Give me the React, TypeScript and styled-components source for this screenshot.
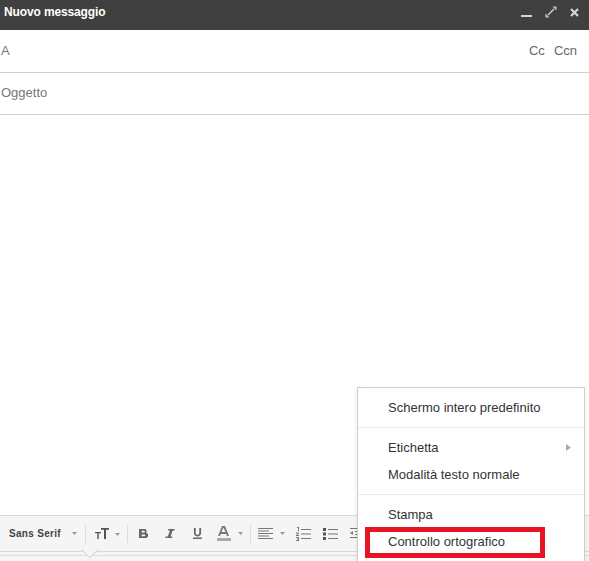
import React from 'react';
import styled, { createGlobalStyle } from 'styled-components';

const Global = createGlobalStyle`
  html, body { margin: 0; padding: 0; background: #fff; }
  body { font-family: "Liberation Sans", Arial, sans-serif; overflow: hidden; }
  * { box-sizing: border-box; }
`;

const Compose = styled.div`
  position: relative;
  width: 589px;
  height: 561px;
  display: flex;
  flex-direction: column;
  overflow: hidden;
  background: #fff;
`;

const Header = styled.header`
  height: 30px;
  flex: none;
  margin-bottom: 1px;
  display: flex;
  align-items: flex-start;
  justify-content: space-between;
  padding: 5px 10px 0 4px;
  background: #404040;
  color: #fff;
  font-size: 12px;
  font-weight: 700;
  line-height: 15px;
  letter-spacing: -0.13px;
`;

const HeaderIcons = styled.div`
  display: flex;
  align-items: center;
  gap: 13px;
  padding-top: 1px;
`;

const Field = styled.div`
  height: 42px;
  flex: none;
  display: flex;
  align-items: center;
  justify-content: space-between;
  padding: 0 12px 2px 1px;
  border-bottom: 1px solid #cfcfcf;
  color: #777;
  font-size: 13px;
`;

const Links = styled.div`
  display: flex;
  gap: 9px;
  font-size: 13px;
  color: #666;
`;

const Body = styled.div`
  flex: 1;
`;

const Toolbar = styled.div`
  height: 37px;
  flex: none;
  display: flex;
  align-items: center;
  padding: 0 0 0 9px;
  background: #f5f5f5;
  border-top: 1px solid #d8d8d8;
  border-bottom: 1px solid #d8d8d8;
`;

const Footer = styled.div`
  position: relative;
  height: 9px;
  flex: none;
  background: #f5f5f5;
  &::after {
    content: '';
    position: absolute;
    left: 0;
    right: 0;
    top: 3px;
    border-top: 1px solid #dcdcdc;
  }
`;

const Notch = styled.span`
  position: absolute;
  left: 84px;
  top: -8px;
  width: 12px;
  height: 12px;
  background: #f5f5f5;
  border-right: 1px solid #d8d8d8;
  border-bottom: 1px solid #d8d8d8;
  transform: rotate(45deg);
  z-index: 1;
`;

const FontName = styled.span`
  font-size: 10px;
  font-weight: 700;
  letter-spacing: 0.3px;
  color: #444;
  width: 60px;
  flex: none;
`;

const Tool = styled.span<{ $w: number }>`
  width: ${p => p.$w}px;
  flex: none;
  display: flex;
  align-items: center;
  justify-content: center;
`;

const Sep = styled.span`
  width: 1px;
  height: 18px;
  flex: none;
  background: #dcdcdc;
`;

const Menu = styled.div`
  position: absolute;
  left: 357px;
  top: 387px;
  width: 228px;
  height: 190px;
  padding: 6px 0;
  background: #fff;
  border: 1px solid #cfcfcf;
  box-shadow: 0 2px 4px rgba(0, 0, 0, 0.1);
  color: #333;
  font-size: 13px;
`;

const MenuItem = styled.div`
  height: 27px;
  display: flex;
  align-items: center;
  justify-content: space-between;
  padding: 0 13px 0 30px;
`;

const MenuRule = styled.div`
  margin: 6px 0;
  border-top: 1px solid #ebebeb;
`;

const Highlight = styled.div`
  position: absolute;
  left: 365px;
  top: 527px;
  width: 180px;
  height: 31px;
  border: 5px solid #e81424;
  pointer-events: none;
`;

const Gly = styled.svg`
  display: block;
  flex: none;
`;

const Caret = () => (
  <Gly width="5" height="3" viewBox="0 0 5 3"><path d="M0 0h5L2.500 3z" fill="#999" /></Gly>
);

export default function App() {
  return (
    <Compose>
      <Global />
      <Header>
        <span>Nuovo messaggio</span>
        <HeaderIcons>
          <Gly width="11" height="12" viewBox="0 0 11 12"><rect y="9" width="11" height="2" fill="#d4d4d4" /></Gly>
          <Gly width="12" height="12" viewBox="0 0 12 12" fill="#c8c8c8">
            <path d="M3 9l6-6" stroke="#c8c8c8" strokeWidth="1.600" />
            <path d="M7.500 0.500H11.500v4zM0.500 7.500V11.500h4z" />
          </Gly>
          <Gly width="9" height="9" viewBox="0 0 9 9" fill="none" stroke="#d4d4d4" strokeWidth="2.200">
            <path d="M1 1l7 7M8 1l-7 7" />
          </Gly>
        </HeaderIcons>
      </Header>
      <Field>
        <span>A</span>
        <Links><span>Cc</span><span>Ccn</span></Links>
      </Field>
      <Field>Oggetto</Field>
      <Body />
      <Toolbar>
        <FontName>Sans Serif</FontName>
        <Tool $w={10}><Caret /></Tool>
        <Tool $w={6} />
        <Sep />
        <Tool $w={41}>
          <Gly width="26" height="11" viewBox="0 0 26 11">
            <path d="M1 4h6v1.300H4.700V11H3.300V5.300H1zM7 0h8v1.800h-3V11h-2V1.800H7z" fill="#555" />
            <path d="M21 5h5l-2.500 3z" fill="#999" />
          </Gly>
        </Tool>
        <Sep />
        <Tool $w={30}>
          <Gly width="9" height="9" viewBox="0 0 10 10">
            <path fillRule="evenodd" d="M0 0h6a2.500 2.500 0 0 1 1.800 4.300A2.800 2.800 0 0 1 6.500 10H0zM3 2v2h2.500a1 1 0 0 0 0-2zM3 6v2h3a1 1 0 0 0 0-2z" fill="#666" />
          </Gly>
        </Tool>
        <Tool $w={24}>
          <Gly width="10" height="9" viewBox="0 0 10 10">
            <path d="M3 0h7v1.800H8L5.500 8.200H7.500V10H0V8.200h2.500L5 1.800H3z" fill="#666" />
          </Gly>
        </Tool>
        <Tool $w={30}>
          <Gly width="9" height="11" viewBox="0 0 10 12">
            <path d="M1 0h2v5.500c0 2.600 4 2.600 4 0V0h2v5.500c0 5-8 5-8 0zM0 10.500h10V12H0z" fill="#666" />
          </Gly>
        </Tool>
        <Tool $w={36}>
          <Gly width="26" height="15" viewBox="0 0 26 15">
            <path d="M5 0h3l4 10H10l-.8-2H3.800L3 10H1zM4.500 6h4L6.500 1.500z" fill="#777" />
            <rect x="0" y="12" width="14" height="3" fill="#aaa" />
            <path d="M21 6h5l-2.500 3z" fill="#999" />
          </Gly>
        </Tool>
        <Tool $w={2} />
        <Sep />
        <Tool $w={41}>
          <Gly width="27" height="11" viewBox="0 0 27 11" fill="#777">
            <path d="M0 0h15v1H0zM0 2.500h11v1H0zM0 5h15v1H0zM0 7.500h11v1H0zM0 10h15v1H0z" />
            <path d="M22 4h5l-2.500 3z" fill="#999" />
          </Gly>
        </Tool>
        <Tool $w={23}>
          <Gly width="15" height="14" viewBox="0 0 15 14" fill="#777">
            <path d="M5 2h10v1H5zM5 6.500h10v1H5zM5 11h10v1H5zM1 0h2v4H2V1H1zM0 5.500h3v1L1 8h2v1H0V8l2-1.500H0zM0 10h3v4H0v-1h2v-.5H1v-1h1V11H0z" />
          </Gly>
        </Tool>
        <Tool $w={31}>
          <Gly width="15" height="12" viewBox="0 0 15 12" fill="#777">
            <path d="M5 1h10v1H5zM5 5.500h10v1H5zM5 10h10v1H5z" />
            <path d="M0 0h3v3H0zM0 4.500h3v3H0zM0 9h3v3H0z" fill="#555" />
          </Gly>
        </Tool>
        <Tool $w={18}>
          <Gly width="10" height="12" viewBox="0 0 10 12" fill="#777">
            <path d="M0 0h10v1H0zM5 3h5v1H5zM5 6h5v1H5zM0 9h10v1H0zM3 3v4L0 5z" />
          </Gly>
        </Tool>
      </Toolbar>
      <Footer><Notch /></Footer>
      <Menu>
        <MenuItem>Schermo intero predefinito</MenuItem>
        <MenuRule />
        <MenuItem>
          Etichetta
          <Gly width="5" height="7" viewBox="0 0 5 7"><path d="M0 0l5 3.500L0 7z" fill="#aaa" /></Gly>
        </MenuItem>
        <MenuItem>Modalità testo normale</MenuItem>
        <MenuRule />
        <MenuItem>Stampa</MenuItem>
        <MenuItem>Controllo ortografico</MenuItem>
      </Menu>
      <Highlight />
    </Compose>
  );
}
